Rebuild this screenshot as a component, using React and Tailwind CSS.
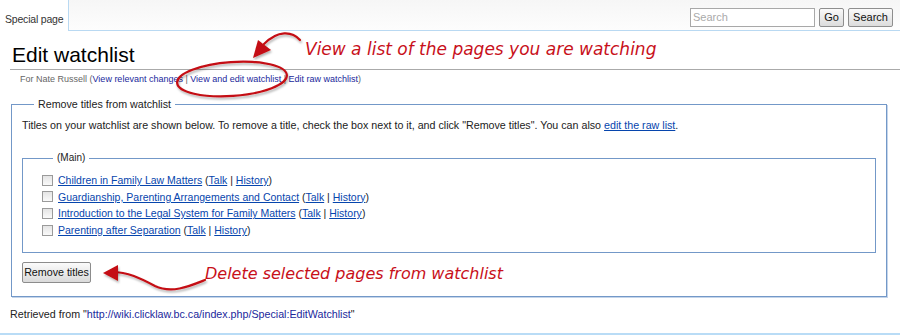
import React from 'react';

const pages = [
  'Children in Family Law Matters',
  'Guardianship, Parenting Arrangements and Contact',
  'Introduction to the Legal System for Family Matters',
  'Parenting after Separation',
];

const Checkbox = () => (
  <span className="inline-block w-[11px] h-[11px] border border-[#9a9a9a] bg-gradient-to-b from-[#e4e4e4] to-[#fafafa] shrink-0" />
);

const App = () => {
  return (
    <div className="relative w-[900px] h-[335px] bg-white overflow-hidden text-[#222]" style={{ fontFamily: '"Liberation Sans", Arial, sans-serif' }}>
      {/* header */}
      <div className="flex h-[31px]">
        <div className="w-[68px] bg-white text-[10.5px] tracking-[-0.2px] whitespace-nowrap text-[#333] pl-[5px] pt-[12px]">Special page</div>
        <div className="flex-1 flex items-start justify-end gap-[4px] pt-[8px] pr-[7px] border-l border-b border-[#b9d9f2] bg-gradient-to-b from-[#f6f6f6] to-[#fdfdfd]">
          <div className="w-[125px] h-[19px] border border-[#a8a8a8] bg-white text-[11px] text-[#aaa] pl-[2px] leading-[17px]">Search</div>
          <div className="w-[25px] h-[19px] border border-[#8e8e8e] rounded-[2px] bg-gradient-to-b from-[#fafafa] to-[#dcdcdc] text-[11px] leading-[17px] text-center text-[#111]">Go</div>
          <div className="w-[45px] h-[19px] border border-[#8e8e8e] rounded-[2px] bg-gradient-to-b from-[#fafafa] to-[#dcdcdc] text-[11px] leading-[17px] text-center text-[#111]">Search</div>
        </div>
      </div>

      {/* title */}
      <div className="pl-[10px]">
        <h1 className="text-[21px] leading-[24px] mt-[12px] pl-[2px] pb-[2px] border-b border-[#aaa] text-black">Edit watchlist</h1>
        <div className="text-[9px] leading-[14px] pl-[10px] mt-[2px] text-[#666]">
          For Nate Russell (<span className="text-[#21289c]">View relevant changes</span> | <span className="text-[#21289c]">View and edit watchlist</span> | <span className="text-[#21289c]">Edit raw watchlist</span>)
        </div>

        {/* outer fieldset */}
        <fieldset className="w-[876px] h-[200px] mt-[11px] ml-[1px] border border-[#7398c8] px-[10px] shadow-[1px_1px_0_#c5d5ea]">
          <legend className="ml-[12px] px-[4px] text-[10.7px] leading-[14px] text-[#222]">Remove titles from watchlist</legend>
          <p className="text-[10.7px] leading-[14px] mt-[7px] text-[#222]">
            Titles on your watchlist are shown below. To remove a title, check the box next to it, and click "Remove titles". You can also <span className="text-[#0645ad] underline">edit the raw list</span>.
          </p>

          <fieldset className="w-[854px] h-[102px] mt-[19px] border border-[#7398c8] pl-[19px]">
            <legend className="ml-[11px] px-[4px] text-[10px] leading-[14px] text-[#222]">(Main)</legend>
            <div className="flex flex-col gap-[2.7px] mt-[8px]">
              {pages.map((p) => (
                <div key={p} className="flex items-center gap-[5px] text-[10.5px] leading-[14px]">
                  <Checkbox />
                  <span>
                    <span className="text-[#0645ad] underline">{p}</span> (<span className="text-[#0645ad] underline">Talk</span> | <span className="text-[#0645ad] underline">History</span>)
                  </span>
                </div>
              ))}
            </div>
          </fieldset>

          <div className="mt-[9px] w-[69px] h-[21px] border border-[#8c8c8c] rounded-[2px] bg-gradient-to-b from-[#fbfbfb] to-[#dadada] text-[10.7px] leading-[19px] text-center text-[#111]">
            Remove titles
          </div>
        </fieldset>

        <div className="text-[10.7px] leading-[14px] mt-[10px] text-[#222]">
          Retrieved from "<span className="text-[#21289c]">http://wiki.clicklaw.bc.ca/index.php/Special:EditWatchlist</span>"
        </div>
      </div>

      <div className="absolute left-0 right-0 bottom-0 h-[2px] bg-[#b9dcf6]" />

      {/* annotations */}
      <svg className="absolute left-0 top-0" width="900" height="335">
        <defs>
          <filter id="sh" x="-20%" y="-20%" width="140%" height="140%">
            <feDropShadow dx="1" dy="2" stdDeviation="1.2" floodColor="#000" floodOpacity="0.3" />
          </filter>
        </defs>
        <g filter="url(#sh)" fill="none" stroke="#c40f12" strokeWidth="2.2" strokeLinecap="round">
          <ellipse cx="232" cy="79" rx="55" ry="17" transform="rotate(-4 232 79)" />
          <path d="M300 40 C 292 31, 278 30, 264 44" />
          <path d="M205 280 C 190 286, 172 294, 155 286 C 140 278, 128 272, 112 272" />
        </g>
        <g filter="url(#sh)" fill="#c40f12">
          <polygon points="253,58 258,40 271,50" />
          <polygon points="103,273 118,265 118,281" />
        </g>
      </svg>
      <div className="absolute left-[305px] top-[37px] text-[17px] leading-[24px] text-[#c8101a] italic" style={{ fontFamily: '"DejaVu Sans", sans-serif' }}>
        View a list of the pages you are watching
      </div>
      <div className="absolute left-[205px] top-[262px] text-[16px] leading-[24px] text-[#c8101a] italic" style={{ fontFamily: '"DejaVu Sans", sans-serif' }}>
        Delete selected pages from watchlist
      </div>
    </div>
  );
};

export default App;
